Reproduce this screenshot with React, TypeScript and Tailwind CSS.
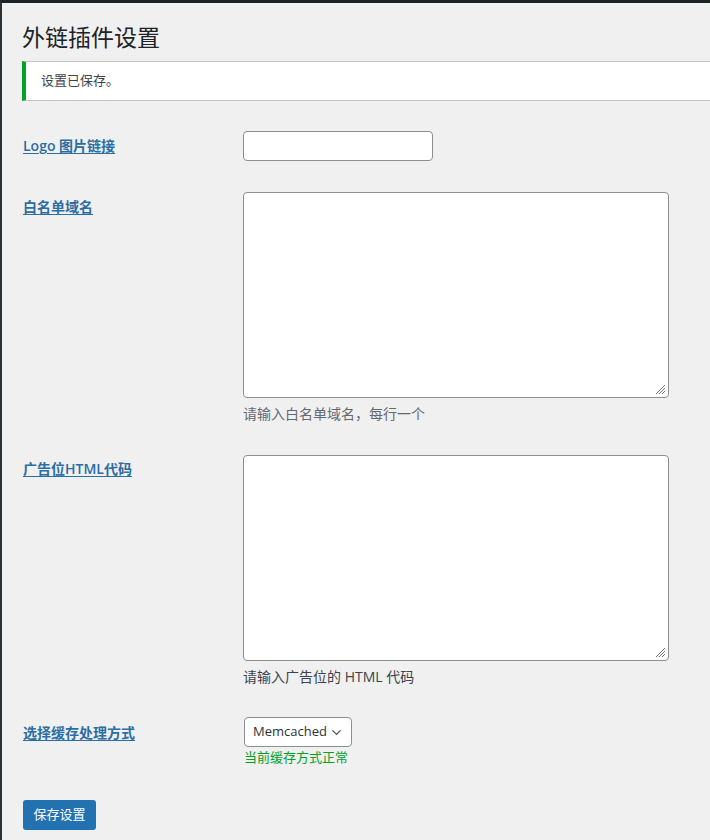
import { ChevronDown } from 'lucide-react'

const font = { fontFamily: '"Open Sans", "Noto Sans CJK SC", sans-serif' }

function Label({ text }: { text: string }) {
  return (
    <span className="text-[14px] font-semibold text-[#2c6da3] underline underline-offset-2 decoration-1">
      {text}
    </span>
  )
}

function Resizer() {
  return (
    <svg className="absolute right-[2px] bottom-[2px] w-[12px] h-[12px]" viewBox="0 0 12 12">
      <path d="M11 2L2 11M11 5L5 11M11 8L8 11" stroke="#777" strokeWidth="1" fill="none" />
    </svg>
  )
}

export default function App() {
  return (
    <div
      className="min-h-[840px] bg-[#f0f0f1] text-[#1d2327] border-t-[3px] border-t-[#1d2327] border-l-2 border-l-[#2c3338] overflow-hidden"
      style={font}
    >
      <div className="pl-[20px]">
        <h1 className="pt-[20px] text-[23px] leading-[29px] font-normal text-[#1d2327]">外链插件设置</h1>

        {/* notice */}
        <div className="mt-[9px] h-[40px] -mr-4 bg-white border border-[#c3c4c7] border-l-4 border-l-[#00a32a] flex items-center pl-[15px]">
          <p className="text-[13px] text-[#3c434a]">设置已保存。</p>
        </div>

        <div className="mt-[30px] flex flex-col">
          {/* logo */}
          <div className="flex">
            <div className="w-[221px] shrink-0 pt-[2px] pl-[1px]">
              <Label text="Logo 图片链接" />
            </div>
            <input className="w-[190px] h-[30px] bg-white border border-[#8c8f94] rounded-[4px]" />
          </div>

          {/* whitelist */}
          <div className="flex mt-[31px]">
            <div className="w-[221px] shrink-0 pt-[2px] pl-[1px]">
              <Label text="白名单域名" />
            </div>
            <div className="flex flex-col">
              <div className="relative w-[426px] h-[206px] bg-white border border-[#8c8f94] rounded-[4px]">
                <Resizer />
              </div>
              <p className="mt-[5px] text-[14px] text-[#646970]">请输入白名单域名，每行一个</p>
            </div>
          </div>

          {/* ad html */}
          <div className="flex mt-[31px]">
            <div className="w-[221px] shrink-0 pt-[1px] pl-[1px]">
              <Label text="广告位HTML代码" />
            </div>
            <div className="flex flex-col">
              <div className="relative w-[426px] h-[206px] bg-white border border-[#8c8f94] rounded-[4px]">
                <Resizer />
              </div>
              <p className="mt-[5px] text-[14px] text-[#3c434a]">请输入广告位的 HTML 代码</p>
            </div>
          </div>

          {/* cache */}
          <div className="flex mt-[30px]">
            <div className="w-[221px] shrink-0 pt-[3px] pl-[1px]">
              <Label text="选择缓存处理方式" />
            </div>
            <div className="flex flex-col pl-[1px]">
              <div className="w-[108px] h-[30px] bg-white border border-[#8c8f94] rounded-[4px] flex items-center justify-between pl-[8px] pr-[7px]">
                <span className="text-[13px] text-[#2c3338]">Memcached</span>
                <ChevronDown className="w-[15px] h-[15px] text-[#50575e]" strokeWidth={2.2} />
              </div>
              <p className="mt-[1px] text-[13px] leading-[18px] text-[#00a32a]">当前缓存方式正常</p>
            </div>
          </div>
        </div>

        <button className="mt-[34px] h-[30px] w-[73px] bg-[#2271b1] rounded-[3px] text-white text-[13px] ml-[1px]">
          保存设置
        </button>
      </div>
    </div>
  )
}
